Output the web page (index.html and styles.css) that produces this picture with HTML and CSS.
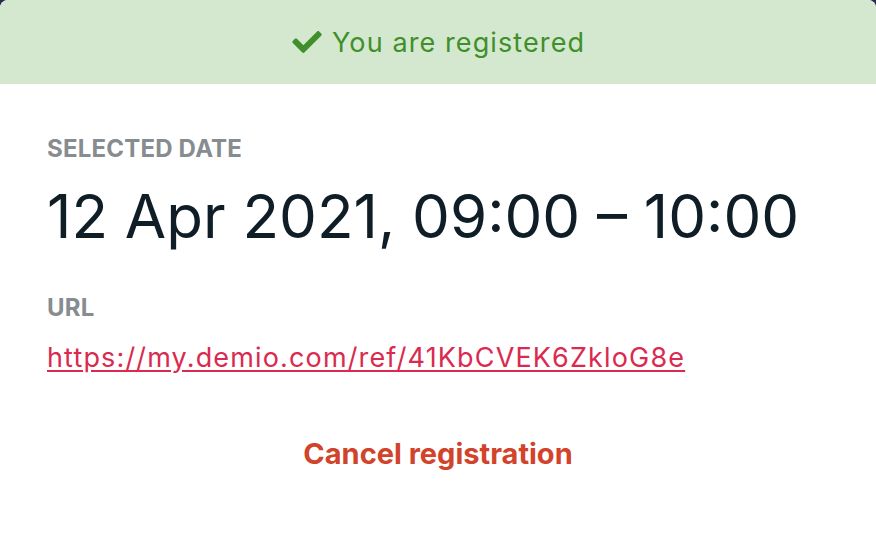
FILE: index.html
```html
<!DOCTYPE html>
<html>
<head>
<meta charset="utf-8">
<link rel="stylesheet" href="styles.css">
</head>
<body>
<div class="card">
  <div class="banner">
    <svg class="check" viewBox="0 64 512 384" width="30" height="22"><path d="M173.898 439.404l-166.4-166.4c-9.997-9.997-9.997-26.206 0-36.204l36.203-36.204c9.997-9.998 26.207-9.998 36.204 0L192 312.69 432.095 72.596c9.997-9.997 26.207-9.997 36.204 0l36.203 36.204c9.997 9.997 9.997 26.206 0 36.204l-294.4 294.401c-9.998 9.997-26.207 9.997-36.204-.001z" fill="#3f8f2a"/></svg>
    <span class="banner-text">You are registered</span>
  </div>
  <div class="content">
    <div class="label">SELECTED DATE</div>
    <div class="date">12 Apr 2021, 09:00 – 10:00</div>
    <div class="label url-label">URL</div>
    <a class="link" href="#">https://my.demio.com/ref/41KbCVEK6ZkloG8e</a>
    <div class="cancel">Cancel registration</div>
  </div>
</div>
</body>
</html>
```
FILE: styles.css
```css
html, body {
  margin: 0;
  padding: 0;
  background: #2b2857;
  height: 100%;
}
.card {
  background: #ffffff;
  border-radius: 8px 8px 0 0;
  overflow: hidden;
  height: 540px;
  font-family: Inter, "Open Sans", sans-serif;
}
.banner {
  background: #d4e8cf;
  height: 84px;
  display: flex;
  align-items: center;
  justify-content: center;
  gap: 10px;
  color: #3f8f2a;
  font-size: 27px;
}
.banner-text {
  letter-spacing: 1.1px;
  margin-right: -1.1px;
}
.check { display: block; }
.content {
  padding: 53px 47px 0;
  display: flex;
  flex-direction: column;
  align-items: flex-start;
}
.label {
  color: #868c90;
  font-weight: 700;
  font-size: 24px;
  line-height: 24px;
  letter-spacing: 0.2px;
}
.date {
  color: #0f1d26;
  font-size: 60px;
  line-height: 60px;
  margin-top: 25px;
}
.url-label { margin-top: 50px; }
.link {
  color: #da2a50;
  font-size: 27px;
  line-height: 27px;
  letter-spacing: 1.15px;
  margin-top: 24px;
  text-underline-offset: 3px;
}
.cancel {
  align-self: stretch;
  text-align: center;
  color: #d2432b;
  font-weight: 700;
  font-size: 29px;
  line-height: 29px;
  margin-top: 68px;
}
```
